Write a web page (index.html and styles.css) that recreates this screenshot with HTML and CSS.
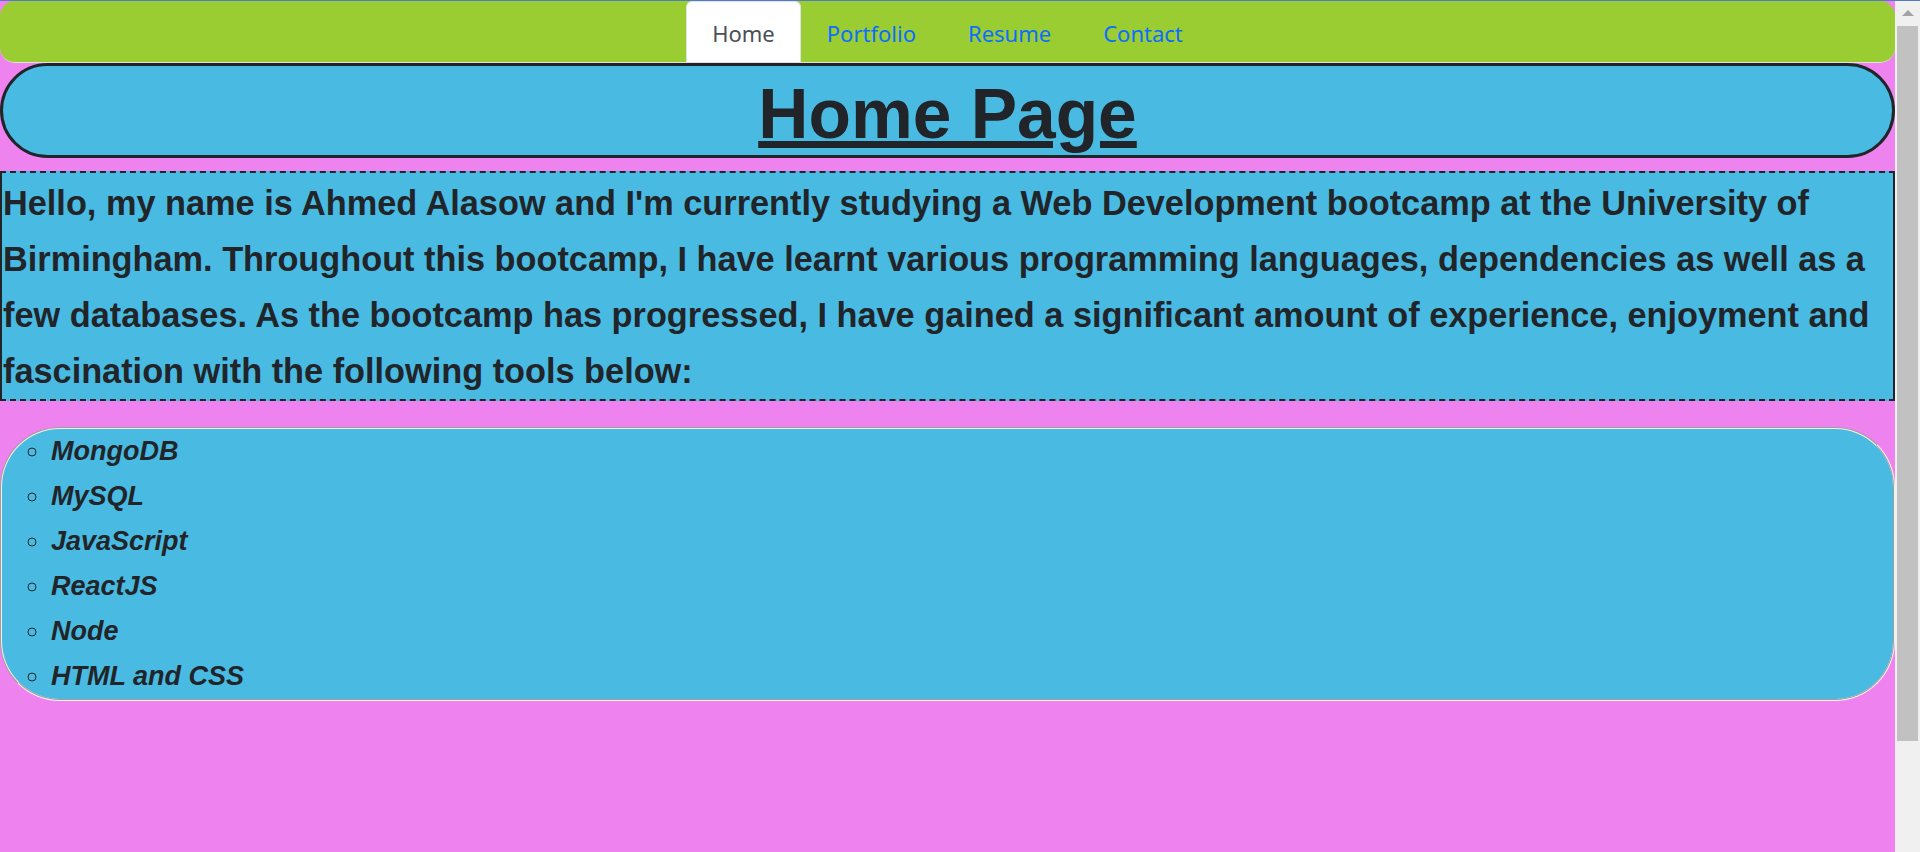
FILE: index.html
```html
<!DOCTYPE html>
<html lang="en">
<head>
<meta charset="utf-8">
<title>Home Page</title>
<link rel="stylesheet" href="styles.css">
</head>
<body>
<div class="frame">
  <div class="topline"></div>
  <div class="window">
    <main class="page">
      <nav class="navbar">
        <ul class="nav-tabs">
          <li><a class="nav-link active" href="#">Home</a></li>
          <li><a class="nav-link" href="#">Portfolio</a></li>
          <li><a class="nav-link" href="#">Resume</a></li>
          <li><a class="nav-link" href="#">Contact</a></li>
        </ul>
      </nav>
      <h1 class="title">Home Page</h1>
      <p class="intro">Hello, my name is Ahmed Alasow and I'm currently studying a Web Development bootcamp at the University of Birmingham. Throughout this bootcamp, I have learnt various programming languages, dependencies as well as a few databases. As the bootcamp has progressed, I have gained a significant amount of experience, enjoyment and fascination with the following tools below:</p>
      <ul class="tools">
        <li>MongoDB</li>
        <li>MySQL</li>
        <li>JavaScript</li>
        <li>ReactJS</li>
        <li>Node</li>
        <li>HTML and CSS</li>
      </ul>
    </main>
    <div class="scrollbar">
      <div class="scroll-btn"><span class="arrow-up"></span></div>
      <div class="scroll-thumb"></div>
    </div>
  </div>
</div>
</body>
</html>
```
FILE: styles.css
```css
html, body {
  margin: 0;
  padding: 0;
}
body {
  font-family: "Liberation Sans", Arial, sans-serif;
  color: #212529;
}
.frame {
  display: flex;
  flex-direction: column;
  height: 852px;
  overflow: hidden;
}
.topline {
  height: 1px;
  background: #4f7cc2;
  flex: none;
}
.window {
  display: flex;
  flex: 1;
  min-height: 0;
}
.page {
  flex: 1;
  min-width: 0;
  background: #ee82ee;
  overflow: hidden;
}
.scrollbar {
  width: 25px;
  flex: none;
  background: #f0f0f0;
  display: flex;
  flex-direction: column;
  align-items: center;
}
.scroll-btn {
  height: 25px;
  width: 100%;
  display: flex;
  align-items: center;
  justify-content: center;
}
.arrow-up {
  width: 0;
  height: 0;
  border-left: 6px solid transparent;
  border-right: 6px solid transparent;
  border-bottom: 6px solid #a3a3a3;
  margin-top: -2px;
}
.scroll-thumb {
  width: 21px;
  height: 715px;
  background: #c1c1c1;
}

/* nav */
.navbar {
  background: #9acd32;
  border-radius: 15px;
  border-bottom: 1px solid #dee2e6;
  height: 61px;
}
.nav-tabs {
  list-style: none;
  margin: 0;
  padding: 0;
  display: flex;
  justify-content: center;
}
.nav-link {
  display: block;
  height: 61px;
  box-sizing: border-box;
  padding: 15px 25px 0;
  font-family: "Noto Sans", "Open Sans", sans-serif;
  font-size: 22px;
  line-height: 33px;
  color: #0d6efd;
  text-decoration: none;
  border: 1px solid transparent;
  border-bottom: none;
  border-radius: 6px 6px 0 0;
}
.nav-link.active {
  background: #fff;
  color: #495057;
  border-color: #dee2e6;
}

/* heading */
.title {
  margin: 0;
  background: #49bbe3;
  border: 3px solid #212529;
  border-radius: 48px;
  height: 95px;
  box-sizing: border-box;
  padding-top: 8px;
  text-align: center;
  font-size: 69.5px;
  line-height: 81px;
  font-weight: 700;
  text-decoration: underline;
  text-decoration-thickness: 7px;
  text-underline-offset: 3px;
}

/* intro */
.intro {
  margin: 13px 0 0;
  background: #49bbe3;
  border: 2px dashed #212529;
  border-left-style: solid;
  border-right-style: solid;
  padding: 2px 1px 0 1px;
  font-size: 34.3px;
  line-height: 56px;
  font-weight: 700;
}

/* tools */
.tools {
  margin: 26px 0 0;
  background: #49bbe3;
  border: 2px groove #f2f2f2;
  border-radius: 60px;
  padding: 0 0 0 49px;
  list-style-type: circle;
  font-size: 27px;
  line-height: 45px;
  font-weight: 700;
  font-style: italic;
}
```
